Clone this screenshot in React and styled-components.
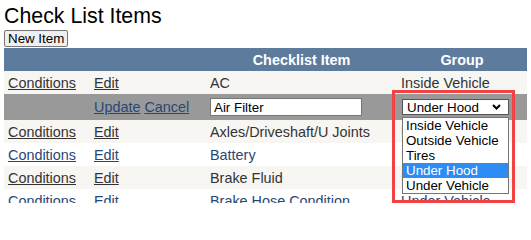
import React from "react";
import styled, { createGlobalStyle } from "styled-components";

const GlobalStyle = createGlobalStyle`
  html, body {
    margin: 0;
    padding: 0;
    height: 203px;
    background: #fff;
    overflow: hidden;
  }
  body {
    font-family: "Liberation Sans", Arial, sans-serif;
  }
`;

const Page = styled.div`
  box-sizing: border-box;
  height: 203px;
  width: 531px;
  padding: 4px 4px 0;
  overflow: hidden;
`;

const Title = styled.h1`
  margin: 0;
  font-size: 21.33px;
  font-weight: normal;
  line-height: 24px;
  color: #000;
`;

const NewButton = styled.button`
  display: block;
  margin: 2px 0 1px;
  height: 17px;
  padding: 0 3px;
  font-family: "Liberation Sans", Arial, sans-serif;
  font-size: 13.33px;
  line-height: 15px;
  color: #000;
  background: #efefef;
  border: 1px solid #767676;
  border-radius: 2px;
`;

const Grid = styled.table`
  width: 523px;
  border-collapse: collapse;
  table-layout: fixed;
  font-size: 14.4px;
`;

const HeadCell = styled.th`
  height: 23px;
  padding: 0 4px;
  background: #5d7b9d;
  color: #fff;
  font-weight: bold;
  text-align: center;
`;

const rowColors = {
  normal: { bg: "#f7f6f3", fg: "#333333" },
  alt: { bg: "#ffffff", fg: "#284775" },
  edit: { bg: "#999999", fg: "#284775" },
};

const Row = styled.tr`
  background: ${(p) => rowColors[p.$kind].bg};
  color: ${(p) => rowColors[p.$kind].fg};
`;

const Cell = styled.td`
  height: ${(p) => (p.$edit ? "18px" : "23px")};
  padding: ${(p) => (p.$edit ? "4px" : "0 4px")};
  white-space: nowrap;
  overflow: visible;
  vertical-align: middle;
`;

const Link = styled.a`
  color: inherit;
  text-decoration: underline;
  cursor: pointer;
`;

const TextBox = styled.input`
  display: block;
  box-sizing: border-box;
  width: 152px;
  height: 18px;
  margin: 0;
  padding: 0 3px;
  font-family: "Liberation Sans", Arial, sans-serif;
  font-size: 13.33px;
  color: #000;
  background: #fff;
  border: 1px solid #767676;
  outline: none;
`;

const SelectWrap = styled.div`
  position: relative;
  width: 107px;
  margin-left: 1px;
`;

const SelectBox = styled.div`
  box-sizing: border-box;
  height: 16px;
  display: flex;
  align-items: center;
  justify-content: space-between;
  padding: 0 7px 0 4px;
  font-size: 13.33px;
  color: #000;
  background: #fff;
  border: 1px solid #555;
`;

const Annotation = styled.div`
  position: absolute;
  top: -9px;
  left: -10px;
  width: 123px;
  height: 113px;
  box-sizing: border-box;
  border: 3px solid #f04444;
  pointer-events: none;
  z-index: 3;
`;

const DropList = styled.ul`
  position: absolute;
  top: 18px;
  left: 0;
  width: 107px;
  box-sizing: border-box;
  margin: 0;
  padding: 0;
  list-style: none;
  background: #fff;
  border: 1px solid #767676;
  z-index: 2;
`;

const Option = styled.li`
  height: 15px;
  line-height: 15px;
  padding-left: 3px;
  font-size: 13.33px;
  color: ${(p) => (p.$active ? "#fff" : "#000")};
  background: ${(p) => (p.$active ? "#2e8cf5" : "transparent")};
`;

const Chevron = () => (
  <svg width="9" height="6" viewBox="0 0 9 6">
    <polyline points="1,1 4.5,4.5 8,1" fill="none" stroke="#000" strokeWidth="2" />
  </svg>
);

const groups = ["Inside Vehicle", "Outside Vehicle", "Tires", "Under Hood", "Under Vehicle"];

const items = [
  { name: "AC", group: "Inside Vehicle" },
  { name: "Air Filter", group: "Under Hood", editing: true },
  { name: "Axles/Driveshaft/U Joints", group: "Under Vehicle" },
  { name: "Battery", group: "Under Hood" },
  { name: "Brake Fluid", group: "Under Hood" },
  { name: "Brake Hose Condition", group: "Under Vehicle" },
];

export default function App() {
  return (
    <Page>
      <GlobalStyle />
      <Title>Check List Items</Title>
      <NewButton>New Item</NewButton>
      <Grid>
        <colgroup>
          <col style={{ width: 86 }} />
          <col style={{ width: 116 }} />
          <col style={{ width: 191 }} />
          <col style={{ width: 130 }} />
        </colgroup>
        <thead>
          <tr>
            <HeadCell />
            <HeadCell />
            <HeadCell>Checklist Item</HeadCell>
            <HeadCell>Group</HeadCell>
          </tr>
        </thead>
        <tbody>
          {items.map((item, i) => {
            if (item.editing) {
              return (
                <Row key={item.name} $kind="edit">
                  <Cell $edit />
                  <Cell $edit>
                    <Link>Update</Link> <Link>Cancel</Link>
                  </Cell>
                  <Cell $edit>
                    <TextBox defaultValue={item.name} />
                  </Cell>
                  <Cell $edit>
                    <SelectWrap>
                      <SelectBox>
                        <span>{item.group}</span>
                        <Chevron />
                      </SelectBox>
                      <DropList>
                        {groups.map((g) => (
                          <Option key={g} $active={g === item.group}>
                            {g}
                          </Option>
                        ))}
                      </DropList>
                      <Annotation />
                    </SelectWrap>
                  </Cell>
                </Row>
              );
            }
            return (
              <Row key={item.name} $kind={i % 2 === 0 ? "normal" : "alt"}>
                <Cell>
                  <Link>Conditions</Link>
                </Cell>
                <Cell>
                  <Link>Edit</Link>
                </Cell>
                <Cell>{item.name}</Cell>
                <Cell>{item.group}</Cell>
              </Row>
            );
          })}
        </tbody>
      </Grid>
    </Page>
  );
}
